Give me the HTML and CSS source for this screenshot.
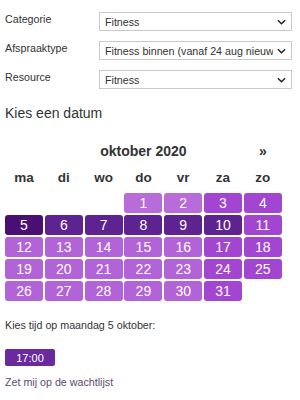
FILE: index.html
```html
<!DOCTYPE html>
<html lang="nl">
<head>
  <meta charset="UTF-8" />
  <title>Afspraak maken</title>
  <link rel="stylesheet" href="styles.css">
</head>
<body>

  <!-- Keuzes -->
  <div class="form-grid">
    <label for="categorie">Categorie</label>
    <div class="select-wrap">
      <select id="categorie"><option>Fitness</option></select>
      <svg class="chevron" viewBox="0 0 10 6" width="9" height="6"><path d="M1 1 L5 5 L9 1" fill="none" stroke="#222" stroke-width="1.6"/></svg>
    </div>

    <label for="type">Afspraaktype</label>
    <div class="select-wrap">
      <select id="type"><option>Fitness binnen (vanaf 24 aug nieuw</option></select>
      <svg class="chevron" viewBox="0 0 10 6" width="9" height="6"><path d="M1 1 L5 5 L9 1" fill="none" stroke="#222" stroke-width="1.6"/></svg>
    </div>

    <label for="resource">Resource</label>
    <div class="select-wrap">
      <select id="resource"><option>Fitness</option></select>
      <svg class="chevron" viewBox="0 0 10 6" width="9" height="6"><path d="M1 1 L5 5 L9 1" fill="none" stroke="#222" stroke-width="1.6"/></svg>
    </div>
  </div>

  <h2 class="section-title">Kies een datum</h2>

  <!-- Kalender -->
  <div class="calendar">
    <div class="cal-head">
      <span class="month">oktober 2020</span>
      <span class="next">&raquo;</span>
    </div>
    <div class="cal-grid weekdays">
      <span>ma</span><span>di</span><span>wo</span><span>do</span><span>vr</span><span>za</span><span>zo</span>
    </div>
    <div class="cal-grid days">
      <span class="empty"></span><span class="empty"></span><span class="empty"></span>
      <span class="day light">1</span>
      <span class="day light">2</span>
      <span class="day weekend">3</span>
      <span class="day weekend">4</span>

      <span class="day selected">5</span>
      <span class="day week">6</span>
      <span class="day week">7</span>
      <span class="day week">8</span>
      <span class="day week">9</span>
      <span class="day week">10</span>
      <span class="day weekend">11</span>

      <span class="day">12</span>
      <span class="day">13</span>
      <span class="day">14</span>
      <span class="day">15</span>
      <span class="day">16</span>
      <span class="day weekend">17</span>
      <span class="day weekend">18</span>

      <span class="day">19</span>
      <span class="day">20</span>
      <span class="day">21</span>
      <span class="day">22</span>
      <span class="day">23</span>
      <span class="day weekend">24</span>
      <span class="day weekend">25</span>

      <span class="day">26</span>
      <span class="day">27</span>
      <span class="day">28</span>
      <span class="day">29</span>
      <span class="day">30</span>
      <span class="day weekend">31</span>
    </div>
  </div>

  <p class="time-label">Kies tijd op maandag 5 oktober:</p>
  <button class="time-btn">17:00</button>
  <a class="waitlist" href="#">Zet mij op de wachtlijst</a>

</body>
</html>
```

FILE: styles.css
```css
body {
  margin: 0;
  padding: 0 5px;
  font-family: 'Liberation Sans', Arial, sans-serif;
  color: #333;
  background: #fff;
}

.form-grid {
  display: grid;
  grid-template-columns: 94px 193px;
  row-gap: 10px;
  margin-top: 12px;
  font-size: 10.7px;
}

.form-grid label {
  line-height: 14px;
  padding-top: 0;
}

.select-wrap {
  position: relative;
  height: 19px;
}

.select-wrap select {
  appearance: none;
  -webkit-appearance: none;
  width: 100%;
  height: 19px;
  margin: 0;
  padding: 0 18px 0 5px;
  border: 1px solid #c9c9c9;
  border-radius: 0;
  background: #fff;
  font-family: inherit;
  font-size: 10.7px;
  color: #333;
}

.chevron {
  position: absolute;
  right: 6px;
  top: 7px;
  pointer-events: none;
}

.section-title {
  margin: 16px 0 0;
  font-size: 14px;
  font-weight: normal;
  line-height: 16px;
}

.calendar {
  margin-top: 20px;
  width: 277px;
}

.cal-head,
.cal-grid {
  display: grid;
  grid-template-columns: repeat(7, 38px);
  column-gap: 1.8px;
}

.cal-head {
  line-height: 20px;
  font-weight: bold;
}

.month {
  grid-column: 2 / 7;
  text-align: center;
  font-size: 14px;
}

.next {
  grid-column: 7;
  text-align: center;
  font-size: 14px;
}

.weekdays {
  margin-top: 7px;
  line-height: 20px;
  font-size: 13.5px;
  font-weight: bold;
  text-align: center;
}

.days {
  margin-top: 5px;
  row-gap: 2px;
}

.day {
  height: 20px;
  line-height: 20px;
  text-align: center;
  font-size: 14px;
  color: #fff;
  background: #b163d7;
  border-radius: 3px;
}

.day.light {
  background: #b86cd9;
}

.day.weekend {
  background: #a246d1;
}

.day.week {
  background: #5c2391;
}

.day.selected {
  background: #4a0f72;
}

.time-label {
  margin: 17px 0 0;
  font-size: 10.7px;
  line-height: 14px;
}

.time-btn {
  display: block;
  margin-top: 17px;
  width: 50px;
  height: 17px;
  padding: 0;
  border: none;
  border-radius: 2px;
  background: #6a2a9d;
  color: #fff;
  font-family: inherit;
  font-size: 11px;
}

.waitlist {
  display: block;
  margin-top: 9px;
  font-size: 10.7px;
  line-height: 14px;
  color: #5e4a70;
  text-decoration: none;
}
```
